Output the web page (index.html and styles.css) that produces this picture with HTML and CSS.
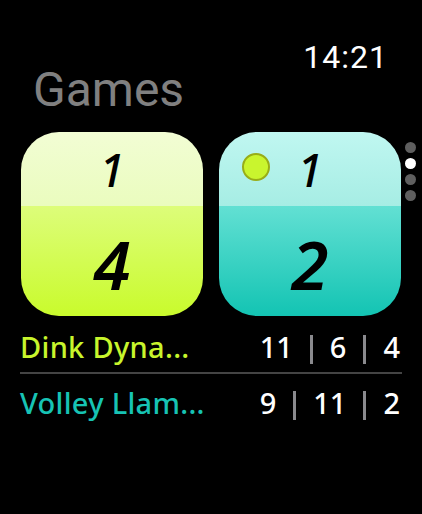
FILE: index.html
```html
<!DOCTYPE html>
<html lang="en">
<head>
    <meta charset="UTF-8">
    <meta name="viewport" content="width=device-width, initial-scale=1.0">
    <title>Games</title>
    <link rel="stylesheet" href="styles.css">
</head>
<body>
    <div class="screen">
        <div class="header">
            <div class="time">14:21</div>
            <h1 class="title">Games</h1>
        </div>

        <div class="cards">
            <div class="card card-yellow">
                <div class="card-top">1</div>
                <div class="card-bottom">4</div>
            </div>
            <div class="card card-teal">
                <span class="serve-ball"></span>
                <div class="card-top">1</div>
                <div class="card-bottom">2</div>
            </div>
            <div class="page-dots">
                <span class="dot"></span>
                <span class="dot active"></span>
                <span class="dot"></span>
                <span class="dot"></span>
            </div>
        </div>

        <div class="team-row first">
            <span class="team-name yellow">Dink Dyna...</span>
            <span class="scores">
                <span>11</span><span class="bar"></span><span>6</span><span class="bar"></span><span>4</span>
            </span>
        </div>
        <div class="team-row">
            <span class="team-name teal">Volley Llam...</span>
            <span class="scores">
                <span>9</span><span class="bar"></span><span>11</span><span class="bar"></span><span>2</span>
            </span>
        </div>
    </div>
</body>
</html>
```

FILE: styles.css
```css
body {
    margin: 0;
    background-color: #000;
    font-family: "Noto Sans", sans-serif;
    color: #fff;
}
.screen {
    width: 422px;
    height: 514px;
    padding-top: 44px;
    box-sizing: border-box;
}
.header {
    display: flex;
    flex-direction: column;
    padding: 0 34px 0 33px;
}
.time {
    align-self: flex-end;
    font-family: Roboto, sans-serif;
    font-size: 32px;
    line-height: 26px;
    letter-spacing: 1px;
}
.title {
    margin: 0;
    font-family: Roboto, sans-serif;
    font-weight: 400;
    font-size: 48px;
    line-height: 40px;
    color: #808080;
}
.cards {
    display: flex;
    gap: 16px;
    margin-top: 22px;
    padding-left: 21px;
}
.card {
    position: relative;
    width: 182px;
    height: 184px;
    border-radius: 38px;
    overflow: hidden;
    display: flex;
    flex-direction: column;
    font-style: italic;
    color: #000;
}
.card-top {
    height: 74px;
    display: flex;
    align-items: center;
    justify-content: center;
    font-size: 45px;
    font-weight: 500;
}
.card-bottom {
    flex: 1;
    display: flex;
    align-items: center;
    justify-content: center;
    padding-top: 6px;
    font-size: 67px;
    font-weight: 600;
}
.card-yellow .card-top {
    background: linear-gradient(#f2fdd4, #eafcbe);
}
.card-yellow .card-bottom {
    background: linear-gradient(#ddfd7a, #c9fb2c);
}
.card-teal .card-top {
    background: linear-gradient(#c0f7f1, #a6ede4);
}
.card-teal .card-bottom {
    background: linear-gradient(#62e0d3, #13c4b3);
}
.serve-ball {
    position: absolute;
    left: 23px;
    top: 21px;
    width: 24px;
    height: 24px;
    border-radius: 50%;
    background: #c9f52e;
    border: 2px solid #98ad18;
}
.page-dots {
    display: flex;
    flex-direction: column;
    gap: 5px;
    margin-top: 10px;
    margin-left: -12px;
}
.dot {
    width: 11px;
    height: 11px;
    border-radius: 50%;
    background: #5f5f5f;
}
.dot.active {
    background: #fff;
}
.team-row {
    display: flex;
    justify-content: space-between;
    align-items: center;
    margin: 0 20px 0 20px;
    height: 36px;
    font-size: 29px;
    font-weight: 500;
}
.team-row.first {
    margin-top: 12px;
    padding-bottom: 8px;
    border-bottom: 2px solid #444;
}
.team-row:not(.first) {
    margin-top: 10px;
}
.team-name {
    letter-spacing: 0.3px;
}
.team-name.yellow {
    color: #c8f52c;
}
.team-name.teal {
    color: #17c3b4;
}
.scores {
    display: flex;
    align-items: center;
    gap: 17px;
    padding-right: 2px;
}
.bar {
    width: 3px;
    height: 29px;
    margin-top: 6px;
    background: #8a8a8e;
}
```
